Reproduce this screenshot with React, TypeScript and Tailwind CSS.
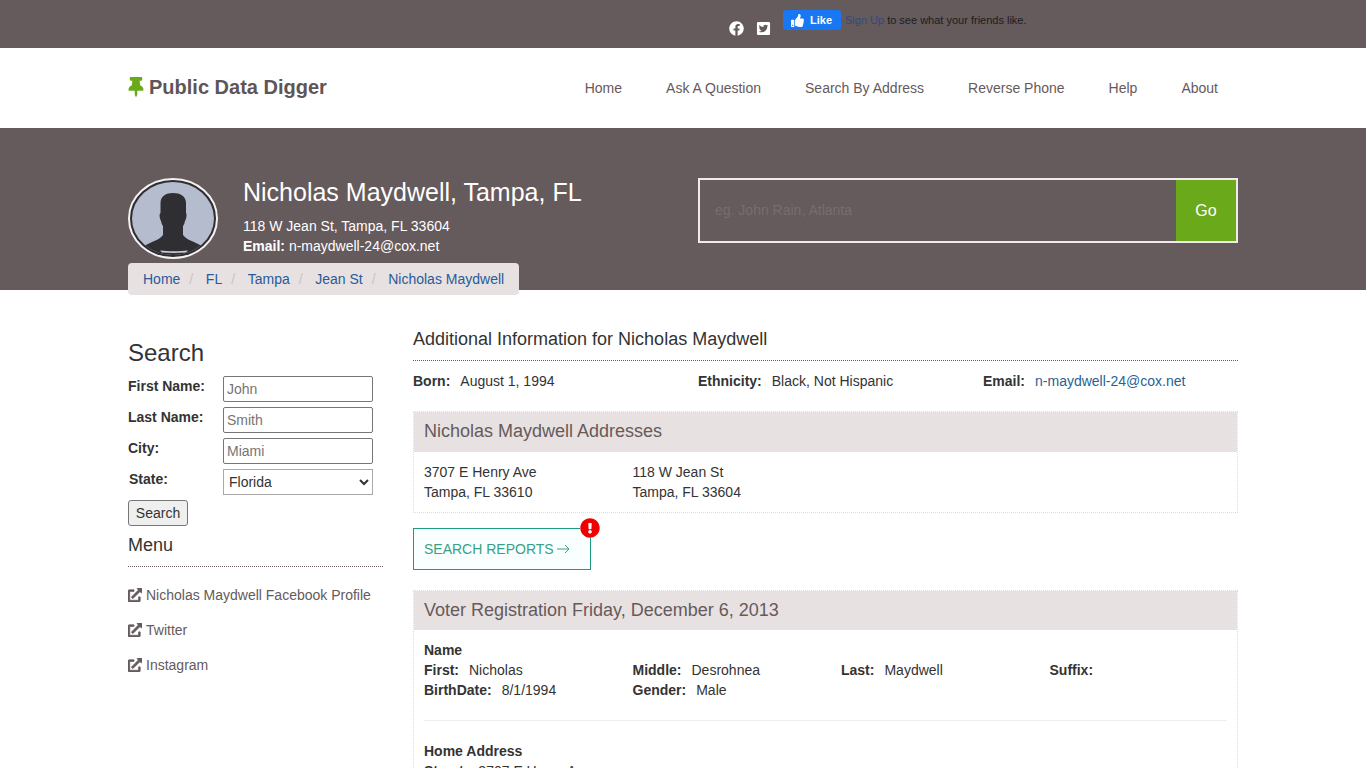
import React from "react";
import { FaFacebook, FaTwitterSquare, FaThumbsUp, FaThumbtack, FaExternalLinkAlt, FaExclamationCircle } from "react-icons/fa";

const Avatar = () => (
  <svg viewBox="0 0 90 81" className="w-[90px] h-[81px] shrink-0 block">
    <defs>
      <clipPath id="av"><ellipse cx="45" cy="40.5" rx="41" ry="36.5" /></clipPath>
    </defs>
    <ellipse cx="45" cy="40.5" rx="44" ry="39.5" fill="#2f2f33" stroke="#f4f1f1" strokeWidth="2" />
    <ellipse cx="45" cy="40.5" rx="41" ry="36.5" fill="#b4bccd" />
    <g clipPath="url(#av)">
      <path d="M32.500 25C32.500 18 38 15 45 15S58 18 58 25L58 35C59 36 58.500 41 57 43C56.500 45 56 47 55 48L55 57C57 60 61 62 66 64L74 68L80 81H10L16 68L24 64C29 62 33 60 35 57L35 48C34 47 33.500 45 33 43C31.500 41 31 36 32.500 35Z" fill="#2f2f33" />
      <path d="M32 72.500C40 73.500 52 73.500 60 72.500L58 74.500C50 75 42 75 34 74.500Z" fill="#c9cdd6" />
    </g>
  </svg>
);

const Field = ({ label, ph }: { label: string; ph: string }) => (
  <div className="flex h-[31px]">
    <label className="w-[95px] font-bold text-[#333] leading-[21px]">{label}</label>
    <input placeholder={ph} className="w-[150px] h-[26px] border border-[#767676] rounded-[2px] px-[3px] text-[14px] placeholder:text-[#757575] bg-white" />
  </div>
);

const SideLink = ({ children }: { children: React.ReactNode }) => (
  <a className="flex items-center h-[35px] text-[#655a5c] text-[14px]">
    <FaExternalLinkAlt className="w-[14px] h-[14px] mr-[4px] text-[#655a5c] stroke-current [stroke-width:24]" />
    {children}
  </a>
);

const Crumb = ({ t, last }: { t: string; last?: boolean }) => (
  <>
    <a className="text-[#2a5a9a]">{t}</a>
    {!last && <span className="text-[#c8c4c4] w-[25.5px] pl-[9px]">/</span>}
  </>
);

const Kv = ({ k, v }: { k: string; v: string }) => (
  <div className="w-[208.5px] shrink-0">
    <b className="font-bold">{k}</b>
    <span className="ml-[10px]">{v}</span>
  </div>
);

export default function App() {
  return (
    <div className="h-screen overflow-hidden bg-white text-[14px] leading-[20px] text-[#333] font-['Liberation_Sans',Arial,sans-serif]">
      <div className="h-[48px] bg-[#655a5c] relative">
        <div className="w-[1110px] mx-auto flex pl-[601px]">
          <FaFacebook className="w-[15px] h-[15px] text-white mt-[20.5px]" />
          <FaTwitterSquare className="w-[15px] h-[15px] text-white mt-[20.5px] ml-[12px]" />
          <div className="flex items-center h-[20px] mt-[10px] ml-[12px]">
            <div className="w-[58px] h-[20px] bg-[#1877f2] rounded-[3px] flex items-center pl-[8px] text-white text-[11px] font-bold">
              <FaThumbsUp className="w-[13px] h-[13px] mr-[6px]" />Like
            </div>
            <span className="ml-[4px] text-[11px] text-[#34497c]">Sign Up</span>
            <span className="ml-[3px] text-[11px] text-[#1c1e21]">to see what your friends like.</span>
          </div>
        </div>
      </div>

      <div className="h-[80px] bg-white">
        <div className="w-[1110px] mx-auto flex items-center justify-between h-full">
          <div className="flex items-center text-[20px] leading-[26px] pb-[2px] font-bold text-[#5e5557]">
            <FaThumbtack className="w-[16px] h-[20px] text-[#6aa91a] mr-[5px]" />
            <span>Public Data Digger</span>
          </div>
          <nav className="flex gap-[44px] pr-[20px] text-[#655a5c] text-[14px]">
            <a>Home</a><a>Ask A Question</a><a>Search By Address</a><a>Reverse Phone</a><a>Help</a><a>About</a>
          </nav>
        </div>
      </div>

      <div className="h-[162px] bg-[#655a5c]">
        <div className="w-[1110px] mx-auto relative h-full flex pt-[50px]">
          <Avatar />
          <div className="ml-[25px] text-white w-[455px]">
            <h1 className="text-[25px] leading-[28px] text-white">Nicholas Maydwell, Tampa, FL</h1>
            <div className="mt-[10px]">118 W Jean St, Tampa, FL 33604</div>
            <div><b>Email:</b> n-maydwell-24@cox.net</div>
          </div>
          <div className="w-[540px] h-[65px] border-2 border-[#f0eaea] flex">
            <input placeholder="eg. John Rain, Atlanta" className="flex-1 bg-transparent pl-[15px] pb-[2px] text-[14px] placeholder:text-[#786d6f]" />
            <div className="w-[60px] bg-[#6aa91a] text-white flex items-center justify-center text-[16px]">Go</div>
          </div>
          <div className="absolute left-0 top-[135px] h-[32px] w-[391px] bg-[#e8e1e1] rounded-[4px] flex items-center pl-[15px]">
            <Crumb t="Home" /><Crumb t="FL" /><Crumb t="Tampa" /><Crumb t="Jean St" /><Crumb t="Nicholas Maydwell" last />
          </div>
        </div>
      </div>

      <div className="w-[1110px] mx-auto flex pt-[35px]">
        <aside className="w-[255px] shrink-0 mr-[30px]">
          <h2 className="text-[24px] leading-[28px] mt-[14px] mb-[9px]">Search</h2>
          <Field label="First Name:" ph="John" />
          <Field label="Last Name:" ph="Smith" />
          <Field label="City:" ph="Miami" />
          <div className="flex h-[31px]">
            <label className="w-[95px] pl-[1px] font-bold leading-[21px]">State:</label>
            <select defaultValue="Florida" className="w-[150px] h-[26px] border border-[#a9a9a9] bg-white text-[14px] pl-[1px]">
              <option>Florida</option>
            </select>
          </div>
          <button className="h-[26px] w-[60px] border border-[#767676] rounded-[3px] bg-[#efefef] text-[14px] text-[#333]">Search</button>
          <h3 className="text-[18px] leading-[22px] mt-[8px]">Menu</h3>
          <div className="border-b border-dotted border-[#655a5c] mt-[10px] mb-[10px]" />
          <SideLink>Nicholas Maydwell Facebook Profile</SideLink>
          <SideLink>Twitter</SideLink>
          <SideLink>Instagram</SideLink>
        </aside>

        <main className="w-[825px]">
          <div className="border-b border-dotted border-[#655a5c] h-[36px] text-[18px] leading-[28px]">Additional Information for Nicholas Maydwell</div>
          <div className="flex h-[50px] pt-[10px]">
            <div className="w-[285px]"><b>Born:</b><span className="ml-[10px]">August 1, 1994</span></div>
            <div className="w-[285px]"><b>Ethnicity:</b><span className="ml-[10px]">Black, Not Hispanic</span></div>
            <div><b>Email:</b><a className="ml-[10px] text-[#2a5f92]">n-maydwell-24@cox.net</a></div>
          </div>
          <section className="border border-dotted border-[#ddd] mb-[15px] h-[102px]">
            <div className="bg-[#e8e1e1] h-[40px] pl-[10px] text-[18px] leading-[38px] text-[#655a5c]">Nicholas Maydwell Addresses</div>
            <div className="flex pl-[10px] pt-[10px]">
              <div className="w-[208.5px]">3707 E Henry Ave<br />Tampa, FL 33610</div>
              <div>118 W Jean St<br />Tampa, FL 33604</div>
            </div>
          </section>
          <div className="relative w-[178px] h-[42px] border border-[#1f9a7f] bg-[#f8fffe] text-[#3c9f83] flex items-center pl-[10px] mb-[20px]">
            SEARCH REPORTS
            <svg viewBox="0 0 13 10" className="w-[13px] h-[10px] ml-[3px]" fill="none" stroke="currentColor" strokeWidth="1">
              <path d="M0 5h12M8 1l4 4-4 4" />
            </svg>
            <span className="absolute -right-[10px] -top-[11px] w-[20px] h-[20px] bg-white rounded-full">
              <FaExclamationCircle className="w-[20px] h-[20px] text-[#f00000]" />
            </span>
          </div>
          <section className="border border-dotted border-[#ddd]">
            <div className="bg-[#e8e1e1] h-[39px] pl-[10px] text-[18px] leading-[38px] text-[#655a5c]">Voter Registration Friday, December 6, 2013</div>
            <div className="px-[10px] pt-[10px]">
              <div className="font-bold">Name</div>
              <div className="flex"><Kv k="First:" v="Nicholas" /><Kv k="Middle:" v="Desrohnea" /><Kv k="Last:" v="Maydwell" /><Kv k="Suffix:" v="" /></div>
              <div className="flex"><Kv k="BirthDate:" v="8/1/1994" /><Kv k="Gender:" v="Male" /></div>
              <div className="border-b border-[#eee] mt-[20px] mb-[20px]" />
              <div className="font-bold">Home Address</div>
              <div className="flex"><Kv k="Street:" v="3707 E Henry Ave" /></div>
            </div>
          </section>
        </main>
      </div>
    </div>
  );
}
